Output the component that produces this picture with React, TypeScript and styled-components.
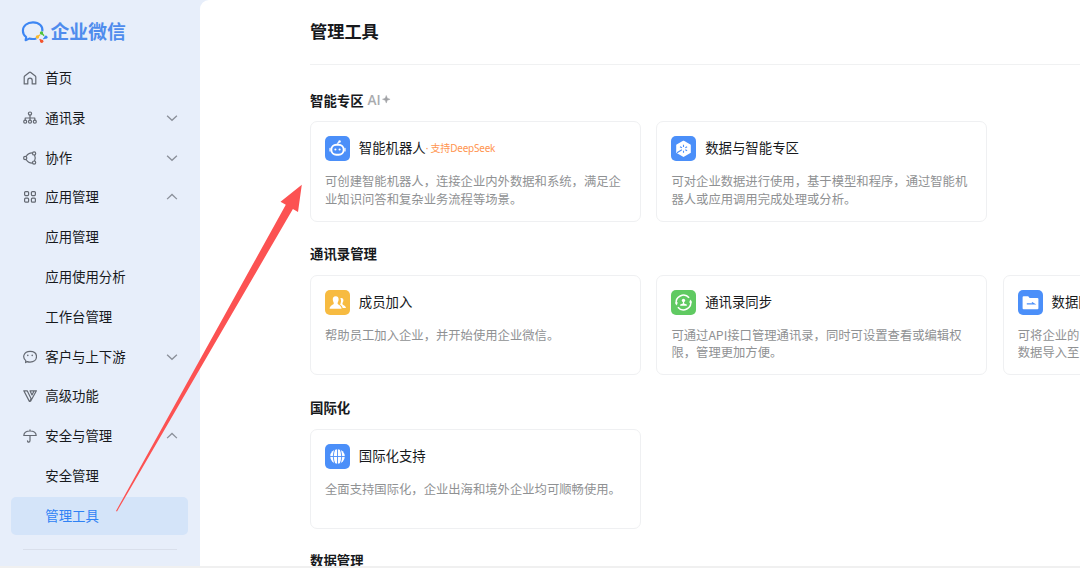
import React from "react";
import styled, { createGlobalStyle } from "styled-components";

const GlobalStyle = createGlobalStyle`
  * { box-sizing: border-box; }
  html, body { margin: 0; overflow: hidden; }
  body {
    background: #fff;
    font-family: "Noto Sans CJK SC", sans-serif;
    color: #17191c;
  }
`;

const Page = styled.div`
  position: relative;
  width: 1080px;
  height: 568px;
  display: flex;
  flex-direction: column;
  overflow: hidden;
  background: #e7eefa;
`;

const Body = styled.div`
  display: flex;
  height: 565.5px;
  overflow: hidden;
`;

const BottomBar = styled.div`
  flex: 1;
  background: #f0f0f0;
`;

const Sidebar = styled.aside`
  width: 199.5px;
  flex: none;
  display: flex;
  flex-direction: column;
  padding: 19px 11.5px 0 11.3px;
`;

const Brand = styled.div`
  display: flex;
  align-items: center;
  gap: 2.6px;
  height: 24px;
  padding-left: 9.7px;
  margin-bottom: 16.3px;
  font-size: 18.8px;
  line-height: 24px;
  font-weight: 700;
  color: #4f8ced;
`;

const Nav = styled.nav`
  display: flex;
  flex-direction: column;
  gap: 2.3px;
`;

const NavItem = styled.div<{ $active?: boolean }>`
  display: flex;
  align-items: center;
  height: 37.5px;
  padding: 0 9.9px 0 12.1px;
  border-radius: 5px;
  font-size: 13.4px;
  line-height: 20px;
  background: ${(p) => (p.$active ? "#d4e4f9" : "transparent")};
  color: ${(p) => (p.$active ? "#2f82f5" : "#17191c")};
`;

const NavIcon = styled.span`
  width: 21.9px;
  height: 14px;
  display: flex;
`;

const NavLabel = styled.span`
  flex: 1;
  padding-bottom: 2px;
  white-space: nowrap;
`;

const NavRule = styled.div`
  height: 1px;
  margin: 14.7px 11.5px 0 12px;
  background: #d9dfeb;
`;

const Main = styled.main`
  flex: 1;
  min-width: 0;
  background: #fff;
  border-top-left-radius: 9px;
  padding-left: 110.5px;
  overflow: hidden;
`;

const PageTitle = styled.h1`
  margin: 0;
  height: 64.5px;
  border-bottom: 1px solid #f0f1f2;
  font-size: 17.2px;
  line-height: 62px;
  font-weight: 700;
`;

const Sections = styled.div`
  padding-top: 25.2px;
`;

const Section = styled.section`
  height: 153.6px;
`;

const SectionTitle = styled.h2`
  display: flex;
  align-items: center;
  gap: 4px;
  margin: 0 0 11.8px;
  height: 20px;
  font-size: 13.4px;
  line-height: 20px;
  font-weight: 700;
`;

const AiTag = styled.span`
  display: flex;
  align-items: center;
  gap: 1.5px;
  font-family: "Open Sans", sans-serif;
  font-size: 13.6px;
  font-weight: 600;
  color: #a9abae;
`;

const CardRow = styled.div`
  display: flex;
  gap: 15.6px;
`;

const Card = styled.article`
  flex: none;
  width: 330.8px;
  height: 100.2px;
  padding: 14px 14px 0;
  border: 1px solid #eff0f2;
  border-radius: 7px;
`;

const CardHead = styled.div`
  display: flex;
  align-items: center;
  height: 25px;
  margin-bottom: 12px;
`;

const CardTitle = styled.span`
  margin-left: 8.8px;
  padding-bottom: 3px;
  font-size: 13.4px;
  line-height: 20px;
  white-space: nowrap;
`;

const CardTag = styled.span`
  font-family: "Noto Sans", "Noto Sans CJK SC", sans-serif;
  font-size: 10px;
  line-height: 16px;
  padding-bottom: 2px;
  letter-spacing: -0.22px;
  color: #ff9550;
  white-space: nowrap;
`;

const CardText = styled.p`
  margin: 0;
  font-size: 12.33px;
  line-height: 17.4px;
  color: #8f9193;
  white-space: pre;
`;

const Arrow = styled.svg`
  position: absolute;
  left: 0;
  top: 0;
  pointer-events: none;
`;

const stroke = {
  fill: "none",
  stroke: "#646972",
  strokeWidth: 1.2,
  strokeLinecap: "round" as const,
  strokeLinejoin: "round" as const,
};

const navIcons: Record<string, React.ReactNode> = {
  home: <path d="M4.8 12.9H1.2V6.1Q1.2 5.4 1.7 5L6.2 1.5Q7 .9 7.8 1.5L12.3 5Q12.8 5.4 12.8 6.1V12.9H9.2V9.4A2.2 2.2 0 0 0 4.8 9.4Z" />,
  contacts: (
    <>
      <circle cx="7" cy="2.6" r="1.6" />
      <path d="M7 4.2V9M2.2 9V7H11.8V9" />
      <circle cx="2.2" cy="10.7" r="1.5" />
      <circle cx="7" cy="10.7" r="1.5" />
      <circle cx="11.8" cy="10.7" r="1.5" />
    </>
  ),
  share: (
    <>
      <circle cx="2.2" cy="7" r="1.6" />
      <circle cx="11.1" cy="2.4" r="1.6" />
      <circle cx="11.1" cy="11.6" r="1.6" />
      <path d="M3.3 5.2Q5.2 1.9 9.2 1.9M3.3 8.8Q5.2 12.1 9.2 12.1M11.6 4.3Q12.9 7 11.6 9.7" />
    </>
  ),
  grid: (
    <>
      <rect x="1.6" y="1.6" width="4" height="4" rx="1" />
      <rect x="8.4" y="1.6" width="4" height="4" rx="1" />
      <rect x="1.6" y="8.2" width="4" height="4" rx="1" />
      <rect x="8.4" y="8.2" width="4" height="4" rx="1" />
    </>
  ),
  chat: (
    <>
      <path d="M2.6 12.6L2.8 10.6C-1 7.6 .6 1.4 7.1 1.3C11.4 1.3 13.5 3.8 13.5 6.6C13.5 9.7 10.9 12.1 7 12.1C5.8 12.1 5 11.9 4.3 11.6Z" />
      <path d="M4.8 5.3V5.6M9.2 5.3V5.6" strokeWidth="1.5" />
    </>
  ),
  advanced: (
    <path d="M.8 1.8H4.2L8 9.6L7 12.4H6.4ZM7.6 12.2L13.4 1.8H7L9 6L10.9 2.2" />
  ),
  umbrella: (
    <path d="M.8 6.5C1 3.6 3.7 2 7 2S13 3.6 13.2 6.5ZM7 .9V2M7 6.5V11.6Q7 13.2 5.7 13.2Q4.5 13.2 4.5 11.8" />
  ),
};

const Chevron = ({ up }: { up?: boolean }) => (
  <svg width="12" height="8" viewBox="0 0 12 8" fill="none" stroke="#8b909a" strokeWidth="1.3">
    <path d={up ? "M1.1 6.1L6 1.5L10.9 6.1" : "M1.1 1.7L6 6.3L10.9 1.7"} />
  </svg>
);

const BrandLogo = () => (
  <svg width="27" height="24" viewBox="0 0 27 24" fill="none">
    <path
      d="M21.3 12.4C22.2 7.4 18.3 3.4 12 3.4C6 3.4 1.9 7 1.9 11.7C1.9 14.4 3.1 16.5 5.2 18L4.6 21.2L8.2 19.6C10.4 20.2 13.2 20.2 15.4 19.4"
      stroke="#3d86f3"
      strokeWidth="2.1"
      strokeLinejoin="round"
    />
    <circle cx="20.5" cy="14" r="1.7" fill="#4fc23a" />
    <circle cx="24.9" cy="18.2" r="1.6" fill="#3d86f3" />
    <circle cx="20.7" cy="22.2" r="1.7" fill="#f4542e" />
    <circle cx="16.4" cy="18" r="1.7" fill="#fbb92e" />
    <path d="M21 14.4L23 16.8" stroke="#4fc23a" strokeWidth="1.4" />
    <path d="M24.7 18.4L22.3 20" stroke="#3d86f3" strokeWidth="1.4" />
    <path d="M20.4 22L18.6 20.2" stroke="#f4542e" strokeWidth="1.4" />
    <path d="M16.8 17.6L19 15.8" stroke="#fbb92e" strokeWidth="1.4" />
  </svg>
);

const glyphs: Record<string, { color: string; art: React.ReactNode }> = {
  robot: {
    color: "#4b8ff9",
    art: (
      <>
        <rect x="6.3" y="8.7" width="12.4" height="10" rx="5" fill="none" stroke="#fff" strokeWidth="1.9" />
        <path d="M5 12.3V15M20 12.3V15M12.7 8.5Q12.5 6.5 14.2 5.7" stroke="#fff" strokeWidth="1.2" strokeLinecap="round" fill="none" />
        <circle cx="14.6" cy="5.5" r="1.2" fill="#fff" />
        <circle cx="10.4" cy="13.5" r="1.05" fill="#fff" />
        <circle cx="14.6" cy="13.5" r="1.05" fill="#fff" />
      </>
    ),
  },
  hexagon: {
    color: "#4b8ff9",
    art: (
      <>
        <path d="M12.5 5.5L19 9.2V16.4L12.5 20.1L6 16.4V9.2Z" fill="#fff" stroke="#fff" strokeWidth="1.6" strokeLinejoin="round" />
        <path d="M12.5 8.8V10.9M12.5 14.8V16.8M9 10.8L10.9 11.8M14.3 13.8L16.1 14.8M16.1 10.8L14.3 11.8M10.9 13.8L6 16.8" stroke="#4b8ff9" strokeWidth="1.1" />
      </>
    ),
  },
  people: {
    color: "#f7bb41",
    art: (
      <>
        <path d="M15.3 8.2C17.6 7.4 18.9 9.2 18.3 11.3C17.9 12.6 17.3 13 17.5 14C17.8 15.2 20.8 15.6 21 18H17.7C17.2 16 16 15.3 15.2 14.8C15.4 13.2 16.9 11 15.3 8.2Z" fill="#fff" />
        <path d="M10.7 6.3C12.9 6.3 13.8 8 13.6 10C13.4 11.7 12.5 12.3 12.6 13.6C12.8 15 16.4 15.4 16.6 18.8H4.6C4.8 15.4 8.6 15 8.8 13.6C8.9 12.3 8 11.7 7.8 10C7.6 8 8.5 6.3 10.7 6.3Z" fill="#fff" />
      </>
    ),
  },
  sync: {
    color: "#60ca62",
    art: (
      <>
        <path d="M5.4 14.2A7.3 7.3 0 0 1 18.1 7.8M19.6 10.8A7.3 7.3 0 0 1 6.9 17.2" stroke="#fff" strokeWidth="1.5" fill="none" />
        <path d="M3.9 12.6L6.8 12.2L5.8 15.4ZM21.1 12.4L18.2 12.8L19.2 9.6Z" fill="#fff" />
        <circle cx="12.5" cy="10.4" r="1.7" fill="#fff" />
        <path d="M11.9 11H13.1V13.4L15.8 14.5V15.8H9.2V14.5L11.9 13.4Z" fill="#fff" />
      </>
    ),
  },
  folder: {
    color: "#4b8ff9",
    art: (
      <>
        <path d="M4.6 7.3Q4.6 6.3 5.6 6.3H10.2L11.6 8H19.4Q20.4 8 20.4 9V18.2Q20.4 19.2 19.4 19.2H5.6Q4.6 19.2 4.6 18.2Z" fill="#fff" />
        <path d="M8.8 13.9H16.4L13.9 12.4" fill="none" stroke="#4b8ff9" strokeWidth="1.1" />
      </>
    ),
  },
  globe: {
    color: "#4b8ff9",
    art: (
      <>
        <circle cx="12.5" cy="12.5" r="7.3" fill="#fff" />
        <path d="M5 12.5H20M12.5 5V20M10 5Q6.6 12.5 10 20M15 5Q18.4 12.5 15 20" stroke="#4b8ff9" strokeWidth=".9" fill="none" />
      </>
    ),
  },
};

const CardIcon = ({ name }: { name: string }) => (
  <svg width="25" height="25" viewBox="0 0 25 25">
    <rect width="25" height="25" rx="5" fill={glyphs[name].color} />
    {glyphs[name].art}
  </svg>
);

interface NavEntry {
  label: string;
  icon?: string;
  chevron?: "up" | "down";
  active?: boolean;
}

const navEntries: NavEntry[] = [
  { label: "首页", icon: "home" },
  { label: "通讯录", icon: "contacts", chevron: "down" },
  { label: "协作", icon: "share", chevron: "down" },
  { label: "应用管理", icon: "grid", chevron: "up" },
  { label: "应用管理" },
  { label: "应用使用分析" },
  { label: "工作台管理" },
  { label: "客户与上下游", icon: "chat", chevron: "down" },
  { label: "高级功能", icon: "advanced" },
  { label: "安全与管理", icon: "umbrella", chevron: "up" },
  { label: "安全管理" },
  { label: "管理工具", active: true },
];

interface Tool {
  icon: string;
  title: string;
  tag?: string;
  text: string;
}

const sections: { title: string; ai?: boolean; tools: Tool[] }[] = [
  {
    title: "智能专区",
    ai: true,
    tools: [
      { icon: "robot", title: "智能机器人", tag: "· 支持DeepSeek", text: "可创建智能机器人，连接企业内外数据和系统，满足企\n业知识问答和复杂业务流程等场景。" },
      { icon: "hexagon", title: "数据与智能专区", text: "可对企业数据进行使用，基于模型和程序，通过智能机\n器人或应用调用完成处理或分析。" },
    ],
  },
  {
    title: "通讯录管理",
    tools: [
      { icon: "people", title: "成员加入", text: "帮助员工加入企业，并开始使用企业微信。" },
      { icon: "sync", title: "通讯录同步", text: "可通过API接口管理通讯录，同时可设置查看或编辑权\n限，管理更加方便。" },
      { icon: "folder", title: "数据同步", text: "可将企业的\n数据导入至" },
    ],
  },
  {
    title: "国际化",
    tools: [{ icon: "globe", title: "国际化支持", text: "全面支持国际化，企业出海和境外企业均可顺畅使用。" }],
  },
  { title: "数据管理", tools: [] },
];

export default function App() {
  return (
    <Page>
      <GlobalStyle />
      <Body>
        <Sidebar>
          <Brand>
            <BrandLogo />
            企业微信
          </Brand>
          <Nav>
            {navEntries.map((n, i) => (
              <NavItem key={i} $active={n.active}>
                <NavIcon>
                  {n.icon && (
                    <svg width="14" height="14" viewBox="0 0 14 14" {...stroke}>
                      {navIcons[n.icon]}
                    </svg>
                  )}
                </NavIcon>
                <NavLabel>{n.label}</NavLabel>
                {n.chevron && <Chevron up={n.chevron === "up"} />}
              </NavItem>
            ))}
          </Nav>
          <NavRule />
        </Sidebar>
        <Main>
          <PageTitle>管理工具</PageTitle>
          <Sections>
            {sections.map((s) => (
              <Section key={s.title}>
                <SectionTitle>
                  {s.title}
                  {s.ai && (
                    <AiTag>
                      AI
                      <svg width="8.5" height="8.5" viewBox="0 0 8 8">
                        <path d="M4 .4L5 3L7.6 4L5 5L4 7.6L3 5L.4 4L3 3Z" fill="#a0a2a5" stroke="#a0a2a5" strokeWidth=".4" />
                      </svg>
                    </AiTag>
                  )}
                </SectionTitle>
                <CardRow>
                  {s.tools.map((t) => (
                    <Card key={t.title}>
                      <CardHead>
                        <CardIcon name={t.icon} />
                        <CardTitle>{t.title}</CardTitle>
                        {t.tag && <CardTag>{t.tag}</CardTag>}
                      </CardHead>
                      <CardText>{t.text}</CardText>
                    </Card>
                  ))}
                </CardRow>
              </Section>
            ))}
          </Sections>
        </Main>
      </Body>
      <BottomBar />
      <Arrow width="1080" height="568" viewBox="0 0 1080 568">
        <path d="M116 511L285.8 204.8L280.5 201.8L301.8 184.8L298 212L292.9 209L117 511.4Z" fill="#fc5252" />
      </Arrow>
    </Page>
  );
}
